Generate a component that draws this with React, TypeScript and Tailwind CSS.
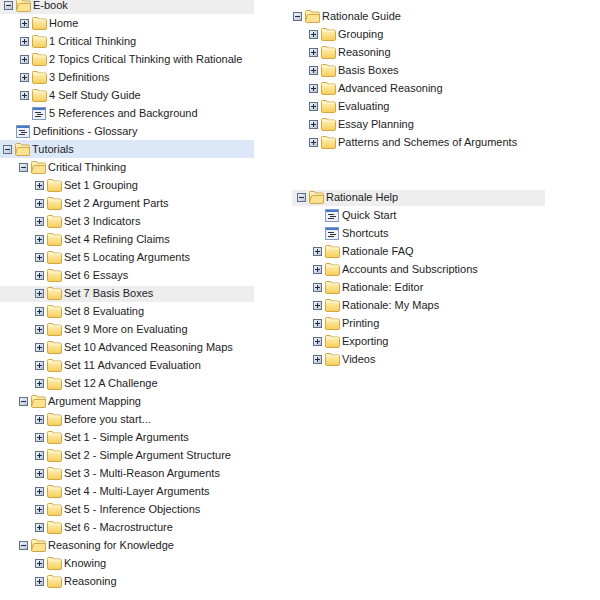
type Row = {
  label: string;
  level: number;
  kind?: "leaf" | "open";
  tint?: string;
  dx?: number;
  slim?: boolean;
};

const ebook: Row[] = [
  { label: "E-book", level: 0, kind: "open", tint: "bg-[#eeeeee]", slim: true, dx: 1 },
  { label: "Home", level: 1, dx: 1 },
  { label: "1 Critical Thinking", level: 1, dx: 1 },
  { label: "2 Topics Critical Thinking with Rationale", level: 1, dx: 1 },
  { label: "3 Definitions", level: 1, dx: 1 },
  { label: "4 Self Study Guide", level: 1, dx: 1 },
  { label: "5 References and Background", level: 1, kind: "leaf", dx: 1 },
  { label: "Definitions - Glossary", level: 0, kind: "leaf", dx: 1 },
  { label: "Tutorials", level: 0, kind: "open", tint: "bg-[#dce8f7]" },
  { label: "Critical Thinking", level: 1, kind: "open" },
  { label: "Set 1 Grouping", level: 2 },
  { label: "Set 2 Argument Parts", level: 2 },
  { label: "Set 3 Indicators", level: 2 },
  { label: "Set 4 Refining Claims", level: 2 },
  { label: "Set 5 Locating Arguments", level: 2 },
  { label: "Set 6 Essays", level: 2 },
  { label: "Set 7 Basis Boxes", level: 2, tint: "bg-[#eeeeee]", slim: true },
  { label: "Set 8 Evaluating", level: 2 },
  { label: "Set 9 More on Evaluating", level: 2 },
  { label: "Set 10 Advanced Reasoning Maps", level: 2 },
  { label: "Set 11 Advanced Evaluation", level: 2 },
  { label: "Set 12 A Challenge", level: 2 },
  { label: "Argument Mapping", level: 1, kind: "open" },
  { label: "Before you start...", level: 2 },
  { label: "Set 1 - Simple Arguments", level: 2 },
  { label: "Set 2 - Simple Argument Structure", level: 2 },
  { label: "Set 3 - Multi-Reason Arguments", level: 2 },
  { label: "Set 4 - Multi-Layer Arguments", level: 2 },
  { label: "Set 5 - Inference Objections", level: 2 },
  { label: "Set 6 - Macrostructure", level: 2 },
  { label: "Reasoning for Knowledge", level: 1, kind: "open" },
  { label: "Knowing", level: 2 },
  { label: "Reasoning", level: 2 },
];

const guide: Row[] = [
  { label: "Rationale Guide", level: 0, kind: "open" },
  { label: "Grouping", level: 1 },
  { label: "Reasoning", level: 1 },
  { label: "Basis Boxes", level: 1 },
  { label: "Advanced Reasoning", level: 1 },
  { label: "Evaluating", level: 1 },
  { label: "Essay Planning", level: 1 },
  { label: "Patterns and Schemes of Arguments", level: 1 },
];

const help: Row[] = [
  { label: "Rationale Help", level: 0, kind: "open", tint: "bg-[#eeeeee]", slim: true, dx: 2 },
  { label: "Quick Start", level: 1, kind: "leaf", dx: 2 },
  { label: "Shortcuts", level: 1, kind: "leaf", dx: 2 },
  { label: "Rationale FAQ", level: 1, dx: 2 },
  { label: "Accounts and Subscriptions", level: 1, dx: 2 },
  { label: "Rationale: Editor", level: 1, dx: 2 },
  { label: "Rationale: My Maps", level: 1, dx: 2 },
  { label: "Printing", level: 1, dx: 2 },
  { label: "Exporting", level: 1, dx: 2 },
  { label: "Videos", level: 1, dx: 2 },
];

function Expander({ open }: { open: boolean }) {
  return (
    <svg width="9" height="9" viewBox="0 0 9 9" className="shrink-0 ml-[1px]">
      <defs>
        <linearGradient id="box" x1="0" y1="0" x2="1" y2="1">
          <stop offset="0" stopColor="#f4f7fb" />
          <stop offset="1" stopColor="#b4c2d6" />
        </linearGradient>
      </defs>
      <rect x="0.5" y="0.5" width="8" height="8" fill="url(#box)" stroke="#5f6f86" />
      <path d={open ? "M2 4.5h5" : "M2 4.5h5M4.5 2v5"} stroke="#1f2a3c" />
    </svg>
  );
}

function Folder({ open }: { open: boolean }) {
  return (
    <svg width="15" height="13" viewBox="0 0 15 13" className="shrink-0 ml-[2px]">
      <defs>
        <linearGradient id="fold" x1="0" y1="0" x2="0" y2="1">
          <stop offset="0" stopColor="#fff6c4" />
          <stop offset="1" stopColor="#f8cd58" />
        </linearGradient>
      </defs>
      <path
        d="M0.5 2.5V1.5Q0.5 0.5 1.5 0.5H5Q6 0.5 6.5 2H13Q14.5 2 14.5 3.5V11Q14.5 12.5 13 12.5H2Q0.5 12.5 0.5 11Z"
        fill="url(#fold)"
        stroke="#d0a848"
      />
      {open ? (
        <path d="M0.5 11.5L2.5 5Q2.8 4.5 3.5 4.5H14.5V11Q14.5 12.5 13 12.5H1.5Z" fill="#fde391" stroke="#d0a848" />
      ) : (
        <path d="M1.5 3H13.5" stroke="#fffbe0" />
      )}
    </svg>
  );
}

function Page() {
  return (
    <svg width="15" height="13" viewBox="0 0 15 13" className="shrink-0 ml-[2px]">
      <rect x="0.5" y="0.5" width="13" height="12" fill="#eef2f8" stroke="#7f9bc4" />
      <rect x="1" y="1" width="12" height="2" fill="#4a78c8" />
      <path d="M3 5.5h6M5 7.5h6M3 9.5h6" stroke="#333333" />
    </svg>
  );
}

function TreeRow({ row }: { row: Row }) {
  const isLeaf = row.kind === "leaf";
  return (
    <div className={`h-[18px] ${row.tint ?? ""} ${row.slim ? "pt-[2px] bg-clip-content" : ""}`}>
      <div
        className={`h-[18px] flex items-center ${row.slim ? "-mt-[2px]" : ""}`}
        style={{ paddingLeft: 2 + row.level * 16 + (row.dx ?? 0) }}
      >
        <div className="w-[11px] shrink-0 flex items-center">
          {!isLeaf && <Expander open={row.kind === "open"} />}
        </div>
        {isLeaf ? <Page /> : <Folder open={row.kind === "open"} />}
        <span className="ml-[2px] whitespace-nowrap text-[#1c1c24] text-[11px] leading-[14px]">
          {row.label}
        </span>
      </div>
    </div>
  );
}

export default function App() {
  return (
    <div className="w-[600px] h-[600px] overflow-hidden bg-white flex font-['Liberation_Sans',Arial,sans-serif]">
      <div className="w-[254px] -mt-1">
        {ebook.map((r) => (
          <TreeRow key={r.label} row={r} />
        ))}
      </div>
      <div className="w-[255px] ml-[36px] pt-[7px]">
        <div>
          {guide.map((r) => (
            <TreeRow key={r.label} row={r} />
          ))}
        </div>
        <div className="mt-[37px] ml-[2px] w-[253px]">
          {help.map((r) => (
            <TreeRow key={r.label} row={r} />
          ))}
        </div>
      </div>
    </div>
  );
}
